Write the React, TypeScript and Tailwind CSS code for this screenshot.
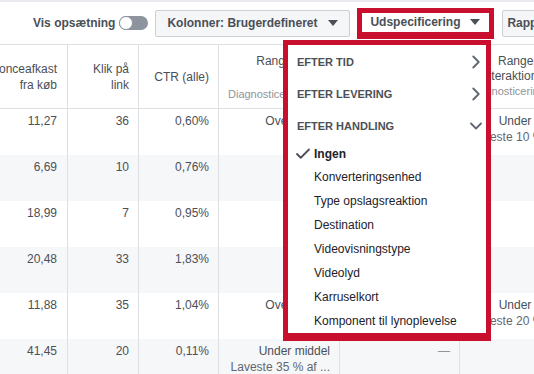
import { Check, ChevronDown, ChevronRight } from 'lucide-react'

type Rank = { l1: string; l2?: string } | null

const COLS = 'grid grid-cols-[120px_71px_80px_121px_120px_120px]'

const ROWS: { v: string[]; r: Rank[] }[] = [
  { v: ['11,27', '36', '0,60%'], r: [{ l1: 'Over middel' }, null, { l1: 'Under middel', l2: 'Laveste 10 % af ...' }] },
  { v: ['6,69', '10', '0,76%'], r: [null, null, null] },
  { v: ['18,99', '7', '0,95%'], r: [null, null, null] },
  { v: ['20,48', '33', '1,83%'], r: [null, null, null] },
  { v: ['11,88', '35', '1,04%'], r: [{ l1: 'Over middel' }, null, { l1: 'Under middel', l2: 'Laveste 20 % af ...' }] },
  { v: ['41,45', '20', '0,11%'], r: [{ l1: 'Under middel', l2: 'Laveste 35 % af ...' }, null, null] },
]

const ITEMS = [
  'Konverteringsenhed',
  'Type opslagsreaktion',
  'Destination',
  'Videovisningstype',
  'Videolyd',
  'Karruselkort',
  'Komponent til lynoplevelse',
]

function Caret() {
  return (
    <span className="shrink-0 inline-block w-0 h-0 border-l-[5px] border-r-[5px] border-t-[6px] border-l-transparent border-r-transparent border-t-[#4b4f56]" />
  )
}

function RankCell({ rank }: { rank: Rank }) {
  return (
    <div className="border-l border-[#dddfe2] pt-[4px] pl-[10px] pr-[9px] text-right whitespace-nowrap overflow-hidden">
      {rank ? (
        <>
          <div className="leading-[16px] text-[#4b4f56]">{rank.l1}</div>
          {rank.l2 && <div className="leading-[16px] text-[#606770]">{rank.l2}</div>}
        </>
      ) : (
        <div className="leading-[16px] text-[#90949c]">—</div>
      )}
    </div>
  )
}

export default function App() {
  return (
    <div className="relative w-[534px] h-[374px] overflow-hidden bg-white font-['Liberation_Sans',Arial,sans-serif] text-[12px] text-[#4b4f56]">
      {/* toolbar */}
      <div className="h-[44px] border-t-2 border-[#e9ebee] flex items-center pl-[33px] whitespace-nowrap">
        <span className="shrink-0 font-bold text-[#4b4f56] leading-[14px]">Vis opsætning</span>
        <span className="shrink-0 ml-[4px] relative w-[29px] h-[14px] rounded-full bg-[#8d949e]">
          <span className="absolute left-0 top-0 w-[14px] h-[14px] rounded-full bg-white border border-[#8d949e]" />
        </span>
        <div className="shrink-0 ml-[7px] h-[27px] w-[195px] border border-[#ccd0d5] bg-[#f5f6f7] rounded-[2px] flex items-center pl-[11px] pr-[11px] justify-between">
          <span className="font-bold">Kolonner: Brugerdefineret</span>
          <Caret />
        </div>
        <div className="shrink-0 ml-[7px] h-[31px] w-[137px] border-[5px] border-b-[7px] border-[#c8102e] bg-white flex items-center pl-[8px] pr-[9px] justify-between">
          <span className="font-bold">Udspecificering</span>
          <Caret />
        </div>
        <div className="shrink-0 ml-[8px] h-[27px] w-[80px] border border-[#ccd0d5] bg-[#f5f6f7] rounded-[2px] flex items-center pl-[4px]">
          <span className="font-bold">Rapporter</span>
        </div>
      </div>

      {/* table */}
      <div className="ml-[-53px] w-[632px] border-t border-[#dddfe2]">
        <div className={`${COLS} h-[64px] border-b border-[#dddfe2] bg-white`}>
          <div className="flex items-center justify-end pr-[10px] text-right leading-[16px]">
            <span>Annonceafkast<br />fra køb</span>
          </div>
          <div className="border-l border-[#dddfe2] flex items-center justify-end pr-[9px] text-right leading-[16px]">
            <span>Klik på<br />link</span>
          </div>
          <div className="border-l border-[#dddfe2] flex items-center justify-end pr-[9px] leading-[16px]">
            <span>CTR (alle)</span>
          </div>
          <div className="border-l border-[#dddfe2] pt-[9px] whitespace-nowrap overflow-hidden">
            <div className="text-right leading-[15px]">Rangering efter<br />kvalitet</div>
            <div className="pl-[9px] mt-[3px] text-[11px] text-[#90949c] leading-[14px]">Diagnosticering</div>
          </div>
          <div className="border-l border-[#dddfe2] pt-[9px] whitespace-nowrap overflow-hidden">
            <div className="text-right leading-[15px]">Rangering efter<br />konverteringsrate</div>
            <div className="pl-[9px] mt-[3px] text-[11px] text-[#90949c] leading-[14px]">Diagnosticering</div>
          </div>
          <div className="border-l border-[#dddfe2] pt-[9px] whitespace-nowrap overflow-hidden">
            <div className="pl-[38px] leading-[15px]">Rangering efter</div>
            <div className="pl-[22px] leading-[15px]">interaktionsrate</div>
            <div className="pl-[9px] text-[11px] text-[#90949c] leading-[14px]">Diagnosticering</div>
          </div>
        </div>
        {ROWS.map((row, i) => (
          <div key={i} className={`${COLS} h-[46px] ${i % 2 ? 'bg-[#f6f7f9]' : 'bg-white'}`}>
            {row.v.map((v, j) => (
              <div
                key={j}
                className={`pt-[4px] leading-[16px] text-right ${j === 0 ? 'pr-[10px]' : 'pr-[9px] border-l border-[#dddfe2]'}`}
              >
                {v}
              </div>
            ))}
            {row.r.map((r, j) => (
              <RankCell key={j} rank={r} />
            ))}
          </div>
        ))}
      </div>

      {/* breakdown dropdown */}
      <div className="absolute left-[283px] top-[40px] w-[208px] h-[301px] border-[5px] border-b-[8px] border-[#c8102e] bg-white whitespace-nowrap">
        {['EFTER TID', 'EFTER LEVERING', 'EFTER HANDLING'].map((h, i) => (
          <div key={h} className="h-[32px] flex items-center justify-between pl-[9px] first:mt-[1px]">
            <span className="text-[11px] font-bold text-[#4b4f56]">{h}</span>
            {i < 2 ? (
              <ChevronRight size={22} strokeWidth={2} className="text-[#606770] -mr-[1px]" />
            ) : (
              <ChevronDown size={20} strokeWidth={2.2} className="text-[#606770] mr-0" />
            )}
          </div>
        ))}
        <div className="h-[22px] mt-[1px] flex items-center pl-[6px]">
          <Check size={18} strokeWidth={2.4} className="text-[#4b4f56]" />
          <span className="ml-[2px] font-bold text-[#1d2129]">Ingen</span>
        </div>
        {ITEMS.map(t => (
          <div key={t} className="h-[24px] flex items-center pl-[26px] text-[#1d2129]">
            {t}
          </div>
        ))}
      </div>
    </div>
  )
}
